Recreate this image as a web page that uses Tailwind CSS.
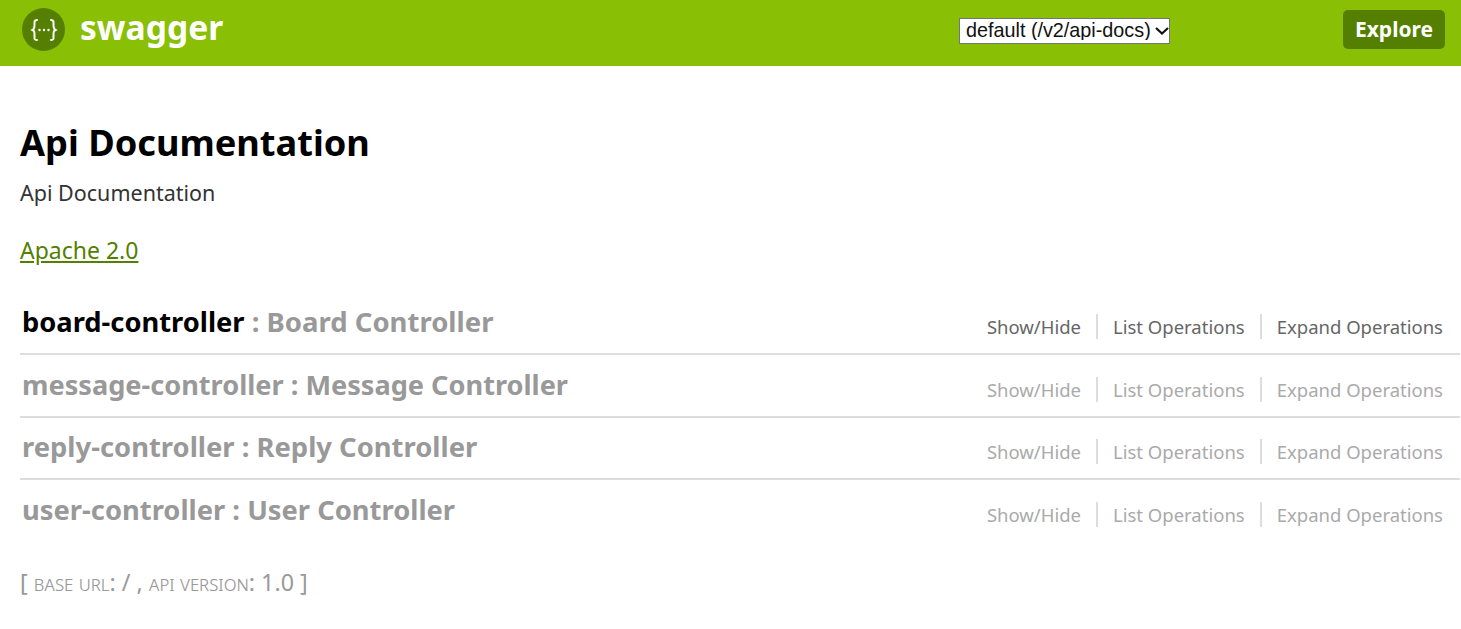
<!DOCTYPE html>
<html lang="en">
<head>
  <meta charset="UTF-8" />
  <title>Swagger UI</title>
  <script src="https://cdn.jsdelivr.net/npm/@tailwindcss/browser@4"></script>
</head>
<body class="bg-white font-['Noto_Sans','Open_Sans',sans-serif] overflow-hidden">
  <!-- header -->
  <header class="h-[66px] bg-[#89bf04] flex items-center pl-[22px] pr-[16px] pb-[7px]">
    <div class="w-[43px] h-[43px] rounded-full bg-[#547f00] flex items-center justify-center text-white">
      <svg width="28" height="24" viewBox="0 0 28 24" fill="none" stroke="currentColor" stroke-width="2" stroke-linecap="round">
        <path d="M7 2c-3 0-2.500 2-2.500 4.500S4.500 11 2.500 12c2 1 2 2 2 5.500S4 22 7 22" />
        <path d="M21 2c3 0 2.500 2 2.500 4.500S23.500 11 25.500 12c-2 1-2 2-2 5.500S24 22 21 22" />
        <path d="M9.500 12h.01M14 12h.01M18.500 12h.01" stroke-width="2.400" />
      </svg>
    </div>
    <span class="ml-[15px] mb-[4px] text-white font-bold text-[33.6px] leading-none">swagger</span>
    <div class="ml-auto flex items-center">
      <div class="relative mt-[2px]">
        <select class="block w-[211px] h-[26px] pl-[6px] bg-white border border-[#767676] text-[#111] text-[19.8px] leading-none font-['Liberation_Sans',sans-serif] appearance-none">
          <option>default (/v2/api-docs)</option>
        </select>
        <svg class="absolute right-[1px] top-[9px] pointer-events-none" width="14" height="8" viewBox="0 0 14 8" fill="none" stroke="#111" stroke-width="2.200">
          <path d="M1 1l6 5.500L13 1" />
        </svg>
      </div>
      <button class="ml-[173px] w-[102px] h-[39px] rounded-[5px] bg-[#547f00] text-white font-bold text-[21px] leading-none">Explore</button>
    </div>
  </header>

  <main class="pl-[20px] pr-[1px]">
    <h1 class="mt-[52px] text-[36.2px] leading-[48px] font-bold text-black">Api Documentation</h1>
    <p class="mt-[13px] text-[21.5px] leading-[28px] text-[#333]">Api Documentation</p>
    <p class="mt-[29px] text-[23px] leading-[28px]"><a href="#" class="text-[#547f00] underline">Apache 2.0</a></p>

    <section class="mt-[28px]">
      <div class="h-[63px] border-b-2 border-[#ddd] flex items-center justify-between pl-[2px]">
        <h2 class="text-[27.3px] font-bold text-[#999] leading-none pb-[2px]"><span class="text-black">board-controller</span> <span class="text-[27.5px]">: Board Controller</span></h2>
        <ul class="flex items-center text-[18.5px] leading-[25px] text-[#666] pr-[17px] pt-[8px]">
          <li class="pr-[15px] border-r-2 border-[#ddd]">Show/Hide</li>
          <li class="px-[15px] border-r-2 border-[#ddd]">List Operations</li>
          <li class="pl-[15px]">Expand Operations</li>
        </ul>
      </div>
      <div class="h-[63px] border-b-2 border-[#ddd] flex items-center justify-between pl-[2px]">
        <h2 class="text-[27.15px] font-bold text-[#999] leading-none pb-[2px]">message-controller : Message Controller</h2>
        <ul class="flex items-center text-[18.5px] leading-[25px] text-[#aaa] pr-[17px] pt-[8px]">
          <li class="pr-[15px] border-r-2 border-[#ddd]">Show/Hide</li>
          <li class="px-[15px] border-r-2 border-[#ddd]">List Operations</li>
          <li class="pl-[15px]">Expand Operations</li>
        </ul>
      </div>
      <div class="h-[62px] border-b-2 border-[#ddd] flex items-center justify-between pl-[2px]">
        <h2 class="text-[27.4px] font-bold text-[#999] leading-none pb-[2px]">reply-controller : Reply Controller</h2>
        <ul class="flex items-center text-[18.5px] leading-[25px] text-[#aaa] pr-[17px] pt-[6px]">
          <li class="pr-[15px] border-r-2 border-[#ddd]">Show/Hide</li>
          <li class="px-[15px] border-r-2 border-[#ddd]">List Operations</li>
          <li class="pl-[15px]">Expand Operations</li>
        </ul>
      </div>
      <div class="h-[63px] flex items-center justify-between pl-[2px]">
        <h2 class="text-[27.35px] font-bold text-[#999] leading-none pb-[4px]">user-controller : User Controller</h2>
        <ul class="flex items-center text-[18.5px] leading-[25px] text-[#aaa] pr-[17px] pt-[6px]">
          <li class="pr-[15px] border-r-2 border-[#ddd]">Show/Hide</li>
          <li class="px-[15px] border-r-2 border-[#ddd]">List Operations</li>
          <li class="pl-[15px]">Expand Operations</li>
        </ul>
      </div>
    </section>

    <p class="mt-[25px] text-[23.3px] leading-[28px] text-[#999]">[ <span class="[font-variant:small-caps] text-[20.7px] font-light">base url</span>: / , <span class="[font-variant:small-caps] text-[20.7px] font-light">api version</span>: 1.0 ]</p>
  </main>
</body>
</html>
